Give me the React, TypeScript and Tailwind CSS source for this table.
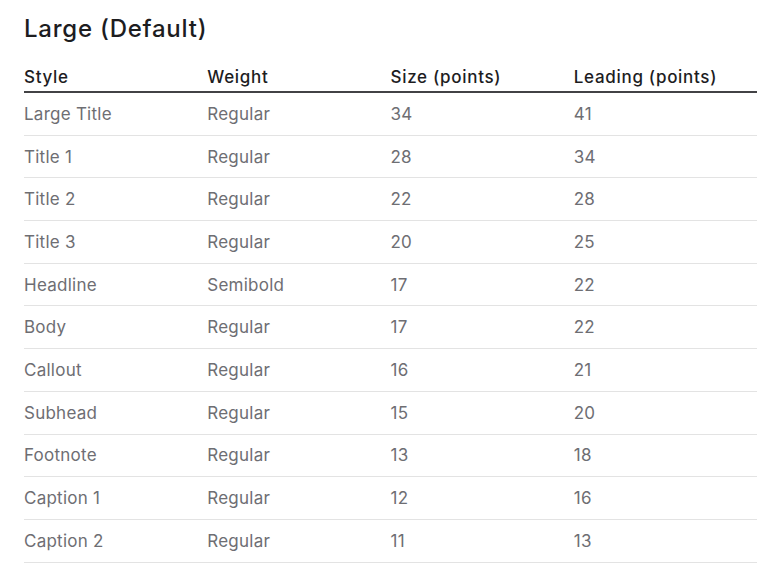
import React from 'react';

const rows: [string, string, string, string][] = [
  ['Large Title', 'Regular', '34', '41'],
  ['Title 1', 'Regular', '28', '34'],
  ['Title 2', 'Regular', '22', '28'],
  ['Title 3', 'Regular', '20', '25'],
  ['Headline', 'Semibold', '17', '22'],
  ['Body', 'Regular', '17', '22'],
  ['Callout', 'Regular', '16', '21'],
  ['Subhead', 'Regular', '15', '20'],
  ['Footnote', 'Regular', '13', '18'],
  ['Caption 1', 'Regular', '12', '16'],
  ['Caption 2', 'Regular', '11', '13'],
];

const headers = ['Style', 'Weight', 'Size (points)', 'Leading (points)'];

export default function App() {
  return (
    <div className="min-h-screen bg-white pl-[24px] pr-[16px] pt-[14px] font-['Inter',sans-serif]">
      <h2 className="text-[24px] leading-[29px] font-medium text-[#1d1d1f] tracking-[0.75px]">Large (Default)</h2>
      <div className="mt-[22px] w-[733px]">
        <div className="grid grid-cols-4 border-b-2 border-[#424245] pb-[2px]">
          {headers.map((h) => (
            <div key={h} className="text-[17px] leading-[24px] font-medium text-[#1d1d1f] tracking-[0.7px]">
              {h}
            </div>
          ))}
        </div>
        {rows.map((r) => (
          <div key={r[0]} className="grid grid-cols-4 border-b border-[#e3e3e3] py-[8.85px]">
            {r.map((c, i) => (
              <div key={i} className="text-[17px] leading-[24px] text-[#6e6e73] tracking-[0.25px]">
                {c}
              </div>
            ))}
          </div>
        ))}
      </div>
    </div>
  );
}
